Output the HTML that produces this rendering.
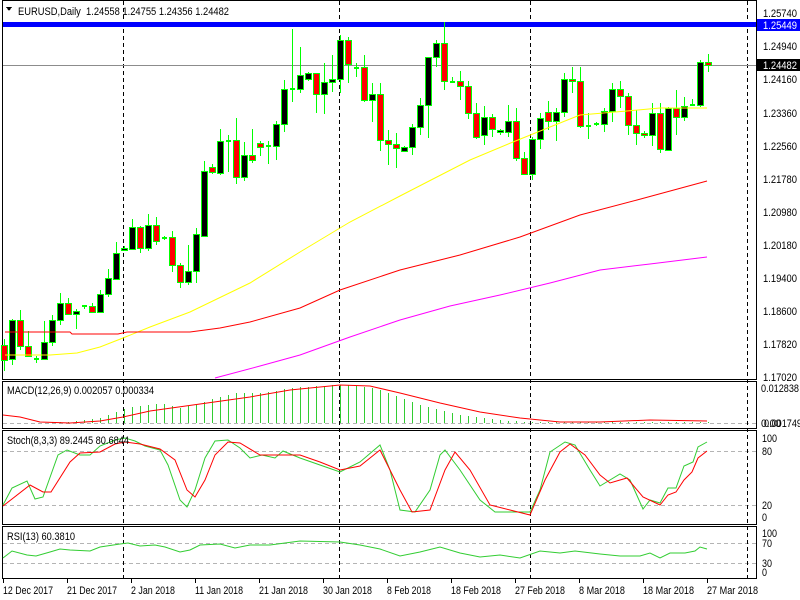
<!DOCTYPE html>
<html><head><meta charset="utf-8"><style>
html,body{margin:0;padding:0;background:#fff;width:800px;height:600px;overflow:hidden}
svg{display:block}
text{font-family:"Liberation Sans","DejaVu Sans",sans-serif;font-size:11px;fill:#000}
</style></head><body>
<svg id="s" width="800" height="600" xmlns="http://www.w3.org/2000/svg" shape-rendering="crispEdges">
<rect width="800" height="600" fill="#fff"/>
<rect x="2.5" y="0.5" width="754" height="379" fill="none" stroke="#000"/>
<rect x="2.5" y="381.5" width="754" height="47" fill="none" stroke="#000"/>
<rect x="2.5" y="430.5" width="754" height="94" fill="none" stroke="#000"/>
<rect x="2.5" y="526.5" width="754" height="52" fill="none" stroke="#000"/>
<g stroke="#b4b4b4" stroke-dasharray="4,3">
<line x1="3" y1="423.5" x2="756" y2="423.5"/>
<line x1="3" y1="451.5" x2="756" y2="451.5"/>
<line x1="3" y1="505.5" x2="756" y2="505.5"/>
<line x1="3" y1="543.5" x2="756" y2="543.5"/>
<line x1="3" y1="563.5" x2="756" y2="563.5"/>
</g>
<g stroke="#000" stroke-dasharray="4,3">
<line x1="123.5" y1="1" x2="123.5" y2="578"/>
<line x1="339.5" y1="1" x2="339.5" y2="578"/>
<line x1="530.5" y1="1" x2="530.5" y2="578"/>
<line x1="747.5" y1="1" x2="747.5" y2="578"/>
</g>
<line x1="3" y1="65.5" x2="756" y2="65.5" stroke="#8c8c8c"/>
<rect x="3" y="22" width="753" height="5" fill="#0000ff"/>
<g id="cand"></g>
<g fill="none" shape-rendering="auto">
<polyline stroke="#ffff00" points="5,355 40,355 50,355 77,353 100,347 123,338 150,327 190,312 250,283 300,252 350,222 400,196 433,179 470,160 513,142 550,127 580,115 627,111 660,108 707,108"/>
<polyline stroke="#ff0000" points="5,332 70,332 72,334 118,334 127,332 190,332 220,328 250,322 300,308 340,290 400,270 460,255 520,237 580,215 637,200 707,181"/>
<polyline stroke="#ff00ff" points="215,378 260,366 300,355 350,337 400,320 450,306 500,295 550,283 600,270 650,264 707,257"/>
</g>
<g id="hist" stroke="#32cd32"></g>
<polyline fill="none" stroke="#ff0000" shape-rendering="auto" points="3,415 20,417 40,422 70,423 100,421 123,417 150,411 200,404 250,397 290,390 340,385 370,386 400,393 440,403 480,412 520,418 560,422 600,422 650,420 707,421"/>
<g fill="none" shape-rendering="auto">
<polyline stroke="#32cd32" points="3,505 12,488 27,481 35,499 43,497 58,455 67,450 80,455 90,455 100,446 115,440 125,438 135,441 145,446 160,450 168,465 180,500 187,507 195,490 205,458 215,441 228,440 240,448 250,458 262,455 275,458 283,451 300,458 320,465 340,472 360,462 380,445 390,470 400,510 415,512 430,490 440,455 445,450 460,470 480,500 495,512 520,512 530,512 540,490 550,452 565,442 575,445 590,470 600,486 620,474 630,480 643,509 650,500 660,503 668,488 676,488 684,466 693,462 698,447 707,442"/>
<polyline stroke="#ff0000" points="3,506 30,485 43,492 51,492 70,462 80,453 100,452 115,444 125,442 140,444 160,449 175,460 187,490 195,497 205,480 215,455 228,442 240,443 260,455 280,455 300,455 320,462 340,470 360,466 380,450 400,490 412,512 430,510 445,470 455,452 470,470 490,505 510,510 530,515 545,480 560,452 570,444 585,455 600,475 610,483 620,480 627,478 643,497 660,505 668,495 676,492 684,480 692,472 698,458 707,451"/>
<polyline stroke="#32cd32" points="3,558 12,551 27,555 36,556 50,552 60,549 70,550 90,551 100,547 120,544 128,543 140,546 155,545 165,547 180,552 190,550 200,545 220,544 235,548 250,545 270,545 285,543 300,541 340,542 360,545 380,549 400,556 420,552 440,547 460,553 480,557 500,555 520,558 540,551 560,553 575,551 600,554 620,556 640,556 650,553 660,558 670,553 685,553 695,551 700,547 707,549"/>
</g>
<polygon points="6,7 12,7 9,11" fill="#000"/>
<text x="18" y="15" textLength="211" lengthAdjust="spacingAndGlyphs">EURUSD,Daily&#160;&#160;1.24558 1.24755 1.24356 1.24482</text>
<text x="7" y="394" textLength="147" lengthAdjust="spacingAndGlyphs">MACD(12,26,9) 0.002057 0.000334</text>
<text x="7" y="444" textLength="122" lengthAdjust="spacingAndGlyphs">Stoch(8,3,3) 89.2445 80.6844</text>
<text x="7" y="540" textLength="68" lengthAdjust="spacingAndGlyphs">RSI(13) 60.3810</text>
<g>
<text x="763" y="17" textLength="34" lengthAdjust="spacingAndGlyphs">1.25740</text>
<rect x="757" y="19" width="43" height="12" fill="#0000ff"/>
<text x="763" y="29" textLength="34" lengthAdjust="spacingAndGlyphs" style="fill:#fff">1.25449</text>
<text x="763" y="50" textLength="34" lengthAdjust="spacingAndGlyphs">1.24940</text>
<rect x="757" y="59" width="43" height="12" fill="#000"/>
<text x="763" y="69" textLength="34" lengthAdjust="spacingAndGlyphs" style="fill:#fff">1.24482</text>
<text x="763" y="83" textLength="34" lengthAdjust="spacingAndGlyphs">1.24160</text>
<text x="763" y="117" textLength="34" lengthAdjust="spacingAndGlyphs">1.23360</text>
<text x="763" y="150" textLength="34" lengthAdjust="spacingAndGlyphs">1.22560</text>
<text x="763" y="183" textLength="34" lengthAdjust="spacingAndGlyphs">1.21780</text>
<text x="763" y="216" textLength="34" lengthAdjust="spacingAndGlyphs">1.20980</text>
<text x="763" y="249" textLength="34" lengthAdjust="spacingAndGlyphs">1.20180</text>
<text x="763" y="282" textLength="34" lengthAdjust="spacingAndGlyphs">1.19400</text>
<text x="763" y="315" textLength="34" lengthAdjust="spacingAndGlyphs">1.18600</text>
<text x="763" y="348" textLength="34" lengthAdjust="spacingAndGlyphs">1.17820</text>
<text x="763" y="381" textLength="34" lengthAdjust="spacingAndGlyphs">1.17020</text>
<text x="761" y="392" textLength="38" lengthAdjust="spacingAndGlyphs">0.012838</text>
<text x="761" y="427" textLength="20" lengthAdjust="spacingAndGlyphs">0.00</text><text x="764" y="427" textLength="38" lengthAdjust="spacingAndGlyphs">0.001749</text>
<text x="762" y="442" textLength="15" lengthAdjust="spacingAndGlyphs">100</text>
<text x="762" y="455" textLength="10" lengthAdjust="spacingAndGlyphs">80</text>
<text x="762" y="509" textLength="10" lengthAdjust="spacingAndGlyphs">20</text>
<text x="762" y="521" textLength="5" lengthAdjust="spacingAndGlyphs">0</text>
<text x="762" y="537" textLength="15" lengthAdjust="spacingAndGlyphs">100</text>
<text x="762" y="547" textLength="10" lengthAdjust="spacingAndGlyphs">70</text>
<text x="762" y="567" textLength="10" lengthAdjust="spacingAndGlyphs">30</text>
<text x="762" y="576" textLength="5" lengthAdjust="spacingAndGlyphs">0</text>
</g>
<g stroke="#000">
<line x1="3.5" y1="579" x2="3.5" y2="583"/><line x1="67.5" y1="579" x2="67.5" y2="583"/><line x1="131.5" y1="579" x2="131.5" y2="583"/><line x1="195.5" y1="579" x2="195.5" y2="583"/><line x1="259.5" y1="579" x2="259.5" y2="583"/><line x1="323.5" y1="579" x2="323.5" y2="583"/><line x1="387.5" y1="579" x2="387.5" y2="583"/><line x1="451.5" y1="579" x2="451.5" y2="583"/><line x1="515.5" y1="579" x2="515.5" y2="583"/><line x1="579.5" y1="579" x2="579.5" y2="583"/><line x1="643.5" y1="579" x2="643.5" y2="583"/><line x1="707.5" y1="579" x2="707.5" y2="583"/>
</g>
<g>
<text x="3" y="594" textLength="50" lengthAdjust="spacingAndGlyphs">12 Dec 2017</text>
<text x="67" y="594" textLength="50" lengthAdjust="spacingAndGlyphs">21 Dec 2017</text>
<text x="131" y="594" textLength="44" lengthAdjust="spacingAndGlyphs">2 Jan 2018</text>
<text x="195" y="594" textLength="48" lengthAdjust="spacingAndGlyphs">11 Jan 2018</text>
<text x="259" y="594" textLength="49" lengthAdjust="spacingAndGlyphs">21 Jan 2018</text>
<text x="323" y="594" textLength="49" lengthAdjust="spacingAndGlyphs">30 Jan 2018</text>
<text x="387" y="594" textLength="44" lengthAdjust="spacingAndGlyphs">8 Feb 2018</text>
<text x="451" y="594" textLength="50" lengthAdjust="spacingAndGlyphs">18 Feb 2018</text>
<text x="515" y="594" textLength="50" lengthAdjust="spacingAndGlyphs">27 Feb 2018</text>
<text x="579" y="594" textLength="46" lengthAdjust="spacingAndGlyphs">8 Mar 2018</text>
<text x="643" y="594" textLength="51" lengthAdjust="spacingAndGlyphs">18 Mar 2018</text>
<text x="707" y="594" textLength="51" lengthAdjust="spacingAndGlyphs">27 Mar 2018</text>
</g>
</svg>
<script>
var C=[[345,360,339,371,0],[320,359,319,365,1],[320,346,310,350,0],[346,356,331,357,0],[359,359,356,363,1],[342,359,321,360,1],[320,342,315,346,1],[303,320,293,325,1],[303,314,298,315,0],[311,314,309,329,1],[306,306,305,309,1],[306,312,303,313,0],[294,312,290,313,1],[278,294,269,297,1],[253,279,242,280,1],[248,250,246,251,1],[227,249,219,250,1],[227,248,226,253,0],[225,248,214,251,1],[225,241,217,245,0],[238,238,236,240,1],[237,265,231,272,0],[265,282,263,288,0],[271,282,245,285,1],[234,271,228,283,1],[171,236,161,237,1],[167,172,164,174,0],[141,173,129,175,1],[141,141,135,172,1],[140,177,118,184,0],[155,177,142,181,1],[155,160,129,163,0],[143,147,141,156,0],[146,146,141,164,1],[124,146,121,160,1],[89,124,80,132,1],[89,89,29,102,1],[75,89,47,93,1],[73,79,72,81,1],[73,94,73,113,0],[82,94,63,114,1],[79,82,55,92,1],[40,79,35,93,1],[40,64,37,83,0],[68,69,63,77,1],[67,100,55,102,0],[94,100,83,122,1],[94,140,83,151,0],[140,144,130,165,0],[144,148,133,168,0],[147,151,146,152,1],[127,147,124,155,1],[105,127,98,135,1],[57,105,57,138,1],[43,57,40,67,1],[43,81,22,90,0],[82,82,77,83,1],[81,86,71,100,0],[86,113,81,119,0],[113,137,103,139,0],[117,135,106,145,1],[117,129,114,137,0],[130,132,129,135,1],[121,132,105,137,1],[121,158,108,161,0],[158,174,152,175,0],[139,174,137,180,1],[118,139,113,149,1],[112,121,101,130,0],[112,121,108,141,1],[79,112,73,117,1],[79,81,67,93,0],[81,126,67,128,0],[126,126,113,139,1],[124,124,122,126,1],[111,124,108,132,1],[89,111,83,122,1],[89,96,81,108,0],[96,125,93,135,0],[125,133,110,145,0],[133,135,131,138,0],[113,135,103,146,1],[113,149,103,153,0],[108,150,107,151,1],[108,117,90,135,0],[106,117,97,121,1],[105,105,99,106,1],[62,105,60,107,1],[62,65,54,72,0]];
var NS="http://www.w3.org/2000/svg",g=document.getElementById("cand"),h=document.getElementById("hist");
function el(t,a,p){var e=document.createElementNS(NS,t);for(var k in a)e.setAttribute(k,a[k]);p.appendChild(e);}
C.forEach(function(c,i){var x=4+8*i;
el("line",{x1:x+.5,y1:c[2],x2:x+.5,y2:c[3],stroke:"#00ff00"},g);
if(c[1]-c[0]<2){el("rect",{x:x-2,y:c[0]-1,width:5,height:2,fill:"#00ff00"},g);}
else el("rect",{x:x-2.5,y:c[0]+.5,width:6,height:c[1]-c[0],fill:c[4]?"#000":"#ff0000",stroke:"#00ff00"},g);
});
var HP=[[0,423],[40,423],[80,421],[100,418],[115,412],[132,407],[160,403],[180,408],[200,403],[220,397],[235,393],[260,393],[280,390],[300,387],[340,385],[360,386],[380,390],[420,405],[460,415],[500,420],[530,422],[700,422],[707,418]];
function hv(x){for(var j=1;j<HP.length;j++){if(x<=HP[j][0]){var a=HP[j-1],b=HP[j];return a[1]+(b[1]-a[1])*(x-a[0])/(b[0]-a[0]);}}return 422;}
C.forEach(function(c,i){var x=4+8*i,y=Math.round(hv(x));if(y<423)el("line",{x1:x+.5,y1:y,x2:x+.5,y2:423},h);});
</script>
</body></html>
